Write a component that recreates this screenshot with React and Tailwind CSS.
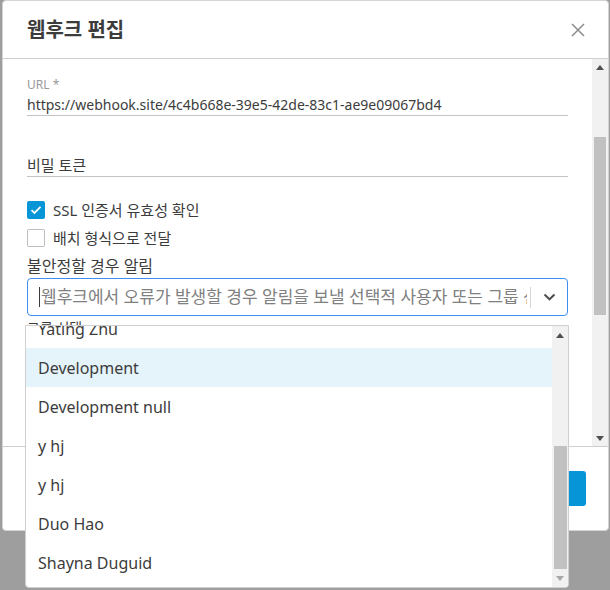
import React from 'react';

const font = { fontFamily: '"Noto Sans", "Noto Sans CJK KR", sans-serif' };

const Arrow = ({ up, color = '#505050' }) => (
  <svg width="8" height="5" viewBox="0 0 8 5">
    <path d={up ? 'M0 5L4 0L8 5Z' : 'M0 0L8 0L4 5Z'} fill={color} />
  </svg>
);

const Field = ({ label, value, placeholder, className = '' }) => (
  <div className={className}>
    <div className="h-4 text-[12px] leading-4 text-[#999]">{label}</div>
    <div
      className={`h-[23px] flex items-center text-[#3c3c3c] border-b border-[#c4c4c4] ${
        value ? 'text-[14px]' : 'text-[15px]'
      }`}
    >
      {value || placeholder}
    </div>
  </div>
);

const Checkbox = ({ checked, label }) => (
  <div className="flex items-center h-[18px] gap-2">
    {checked ? (
      <div className="w-[18px] h-[18px] rounded-[2px] bg-[#0696d7] flex items-center justify-center">
        <svg width="12" height="10" viewBox="0 0 12 10">
          <path d="M1.5 5.2L4.5 8L10.5 1.8" stroke="#fff" strokeWidth="1.8" fill="none" />
        </svg>
      </div>
    ) : (
      <div className="w-[18px] h-[18px] rounded-[2px] border border-[#bdbdbd] bg-white" />
    )}
    <span className="text-[15px] text-[#3c3c3c]">{label}</span>
  </div>
);

const options = ['Yating Zhu', 'Development', 'Development null', 'y hj', 'y hj', 'Duo Hao', 'Shayna Duguid', 'Ying Li'];

export default function App() {
  return (
    <div className="relative w-[610px] h-[590px] bg-[#9e9e9e] overflow-hidden" style={font}>
      {/* modal */}
      <div className="ml-[2px] w-[607px] h-[531px] bg-white rounded-[4px] border border-[#d4d4d4] flex flex-col">
        <div className="h-[58px] flex items-center justify-between pl-6 pr-[23px] border-b border-[#cfcfcf] shrink-0">
          <h2 className="text-[20px] font-bold text-[#3c3c3c]">웹후크 편집</h2>
          <svg width="14" height="14" viewBox="0 0 14 14">
            <path d="M1 1L13 13M13 1L1 13" stroke="#8c8c8c" strokeWidth="1.5" />
          </svg>
        </div>

        <div className="h-[387px] flex shrink-0">
          <div className="flex-1 overflow-hidden pl-6 pr-6 pt-[18px]">
            <Field label="URL *" value="https://webhook.site/4c4b668e-39e5-42de-83c1-ae9e09067bd4" />
            <Field label="" placeholder="비밀 토큰" className="mt-[22px]" />
            <div className="mt-6 flex flex-col gap-[10px]">
              <Checkbox checked label="SSL 인증서 유효성 확인" />
              <Checkbox label="배치 형식으로 전달" />
            </div>
            <div className="mt-2 text-[16px] leading-[22px] text-[#3c3c3c]">불안정할 경우 알림</div>
            <div className="mt-[1px] h-[38px] border border-[#3d8ef0] rounded-[4px] flex items-center">
              <div className="flex-1 overflow-hidden whitespace-nowrap pl-[11px] text-[17px] text-[#808080] flex items-center">
                <span className="w-px h-[20px] bg-[#3c3c3c] mr-[1px] shrink-0" />
                웹후크에서 오류가 발생할 경우 알림을 보낼 선택적 사용자 또는 그룹 선택
              </div>
              <div className="w-px h-[21px] bg-[#d6d6d6] ml-[3px]" />
              <div className="w-[36px] flex items-center justify-center">
                <svg width="13" height="8" viewBox="0 0 13 8">
                  <path d="M1.5 1.5L6.5 6.3L11.5 1.5" stroke="#505050" strokeWidth="2" fill="none" />
                </svg>
              </div>
            </div>
            <div className="mt-[2px] text-[14px] leading-5 text-[#3c3c3c]">그룹 선택</div>
          </div>
          {/* scrollbar */}
          <div className="w-[16px] bg-[#f1f1f1] flex flex-col items-center">
            <div className="h-[16px] flex items-center justify-center"><Arrow up /></div>
            <div className="mt-[62px] w-[12px] h-[178px] bg-[#c1c1c1]" />
            <div className="flex-1" />
            <div className="h-[16px] flex items-center justify-center"><Arrow /></div>
          </div>
        </div>

        <div className="flex-1 border-t border-[#cfcfcf] flex items-center justify-end pr-[22px]">
          <button className="h-[35px] px-5 rounded-[3px] bg-[#0696d7] text-white text-[14px]">저장</button>
        </div>
      </div>

      {/* dropdown menu */}
      <div className="absolute left-[25px] top-[325px] w-[544px] h-[263px] bg-white border border-[#cfcfcf] rounded-b-[4px] flex overflow-hidden">
        <div className="flex-1 overflow-hidden">
          <div className="mt-[-17px]">
            {options.map((opt, i) => (
              <div
                key={i}
                className={`h-[39px] px-3 flex items-center text-[16px] text-[#3c3c3c] ${
                  i === 1 ? 'bg-[#e5f3fb]' : ''
                }`}
              >
                {opt}
              </div>
            ))}
          </div>
        </div>
        <div className="w-[16px] bg-[#f1f1f1] flex flex-col items-center">
          <div className="h-[18px] flex items-center justify-center"><Arrow up /></div>
          <div className="mt-[102px] w-[13px] h-[123px] bg-[#c1c1c1]" />
          <div className="flex-1" />
          <div className="h-[18px] flex items-center justify-center"><Arrow color="#a8a8a8" /></div>
        </div>
      </div>
    </div>
  );
}
